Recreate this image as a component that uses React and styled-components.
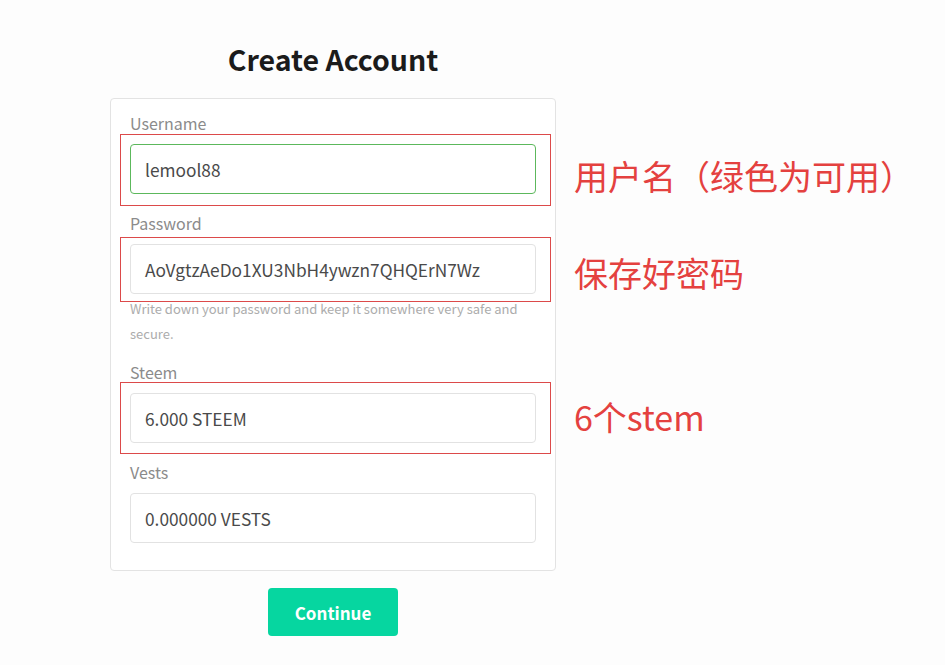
import React from 'react'
import styled, { createGlobalStyle } from 'styled-components'

const FONT = `"Noto Sans CJK SC", "Source Sans Pro", Lato, sans-serif`

const GlobalStyle = createGlobalStyle`
  html, body {
    margin: 0;
    padding: 0;
    background: #fdfdfd;
  }
  body {
    font-family: ${FONT};
    width: 945px;
    height: 665px;
    overflow: hidden;
  }
`

const Page = styled.div`
  display: flex;
  flex-direction: column;
  align-items: center;
  width: 446px;
  margin-left: 110px;
  padding-top: 41px;
`
const Title = styled.h1`
  margin: 0 0 21px;
  font-size: 28.5px;
  line-height: 36px;
  font-weight: 700;
  color: #1b1b1b;
`
const Card = styled.form`
  display: flex;
  flex-direction: column;
  box-sizing: border-box;
  width: 446px;
  padding: 14px 19px 27px;
  background: #fff;
  border: 1px solid #e3e3e3;
  border-radius: 4px;
`
const Field = styled.div`
  display: flex;
  flex-direction: column;
  margin-bottom: ${props => props.$gap}px;
`
const Label = styled.label`
  font-size: 16px;
  line-height: 20px;
  color: #8b8b8b;
  margin-bottom: 11px;
`
const Input = styled.div`
  box-sizing: border-box;
  height: 50px;
  padding: 0 14px;
  display: flex;
  align-items: center;
  font-size: 17.3px;
  color: #4a4a4a;
  background: #fff;
  border: 1px solid ${props => (props.$valid ? '#5cb85c' : '#e2e2e2')};
  border-radius: 4px;
`
const HelpText = styled.p`
  margin: 2px 0 0;
  font-size: 13px;
  line-height: 25px;
  color: #acacac;
`
// red annotation frame drawn around a field, does not shift the flow
const Highlight = styled.div`
  position: relative;
  margin: -${props => props.$top}px -15px -${props => props.$bottom}px -10px;
  padding: ${props => props.$top - 1}px 14px ${props => props.$bottom - 1}px 9px;
  border: 1px solid #dc4a4a;
`
const Note = styled.span`
  position: absolute;
  left: calc(100% + 24px);
  top: ${props => props.$y}px;
  white-space: nowrap;
  font-size: 34px;
  line-height: 40px;
  color: #e4413f;
`
const Button = styled.button`
  margin-top: 17px;
  width: 130px;
  height: 48px;
  border: none;
  border-radius: 4px;
  background: #06d6a0;
  color: #fff;
  font-family: ${FONT};
  font-size: 17px;
  font-weight: 700;
  cursor: pointer;
`

const App = () => (
  <>
    <GlobalStyle />
    <Page>
      <Title>Create Account</Title>
      <Card>
        <Field $gap={19}>
          <Label>Username</Label>
          <Highlight $top={10} $bottom={12}>
            <Input $valid>lemool88</Input>
            <Note $y={21}>用户名（绿色为可用）</Note>
          </Highlight>
        </Field>
        <Field $gap={16}>
          <Label>Password</Label>
          <Highlight $top={7} $bottom={8}>
            <Input>AoVgtzAeDo1XU3NbH4ywzn7QHQErN7Wz</Input>
            <Note $y={15}>保存好密码</Note>
          </Highlight>
          <HelpText>Write down your password and keep it somewhere very safe and secure.</HelpText>
        </Field>
        <Field $gap={19}>
          <Label>Steem</Label>
          <Highlight $top={11} $bottom={11}>
            <Input>6.000 STEEM</Input>
            <Note $y={14}>6个stem</Note>
          </Highlight>
        </Field>
        <Field $gap={0}>
          <Label>Vests</Label>
          <Input>0.000000 VESTS</Input>
        </Field>
      </Card>
      <Button type="button">Continue</Button>
    </Page>
  </>
)

export default App
